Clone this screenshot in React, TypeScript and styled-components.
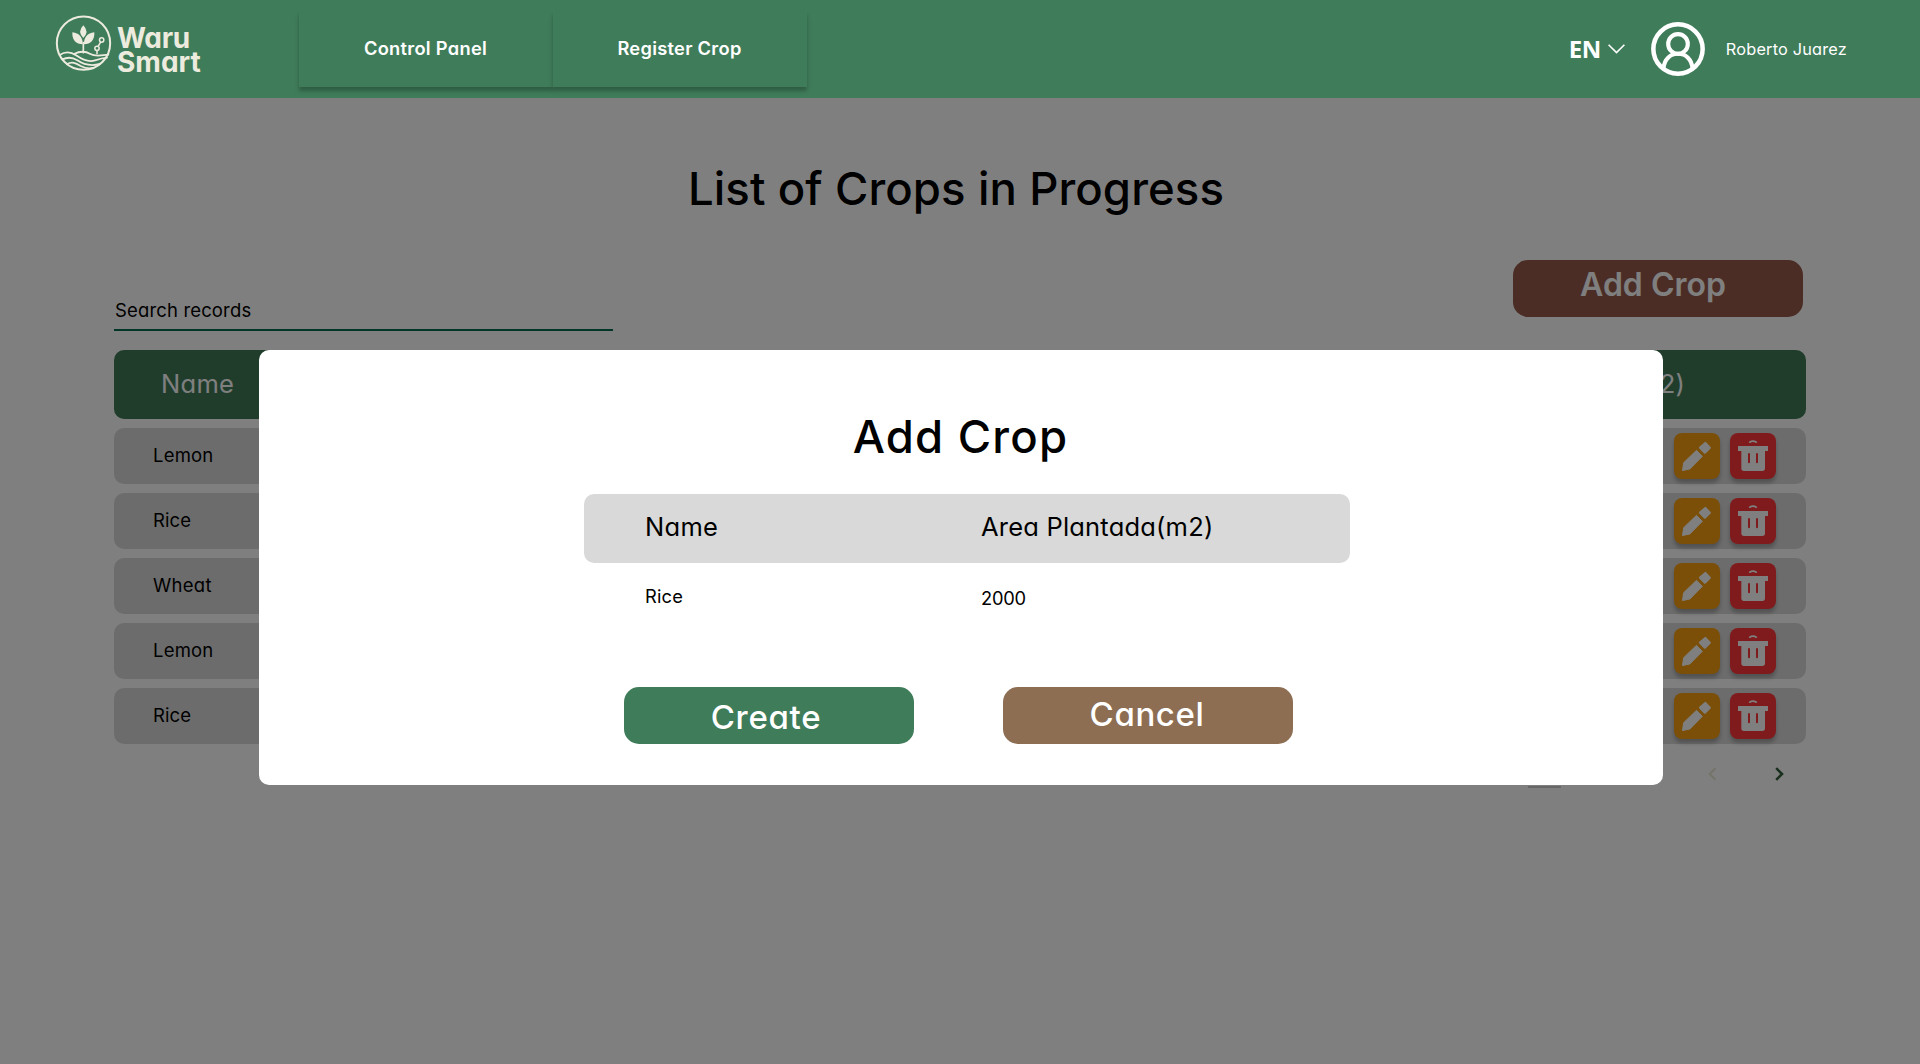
import React from 'react';
import styled, { createGlobalStyle } from 'styled-components';

const GlobalStyle = createGlobalStyle`
  *, *::before, *::after { box-sizing: border-box; }
  body {
    margin: 0;
    background: #fff;
    color: #000;
    font-family: Inter, "Liberation Sans", sans-serif;
    font-feature-settings: "cv11";
  }
  button { font: inherit; font-feature-settings: inherit; border: 0; padding: 0; cursor: pointer; }
`;

const Screen = styled.div`
  position: relative;
  display: flex;
  flex-direction: column;
  width: 1920px;
  height: 1064px;
  overflow: hidden;
`;

/* ---------- header ---------- */

const Header = styled.header`
  display: flex;
  align-items: flex-start;
  height: 98px;
  flex: none;
  padding: 0 73px 0 50px;
  background: #3f7c5a;
  color: #fff;
`;

const Brand = styled.div`
  display: flex;
  width: 249px;
  padding-top: 8px;
  color: #ecebdd;
`;

const BrandName = styled.div`
  display: flex;
  flex-direction: column;
  margin: 18px 0 0 -3px;
  font-size: 28px;
  font-weight: 700;
  line-height: 24px;
`;

const BrandLine = styled.span<{ $spacing: number }>`
  letter-spacing: ${p => p.$spacing}px;
`;

const Nav = styled.nav`
  display: flex;
  margin-top: 11px;
`;

const NavItem = styled.button`
  width: 254px;
  height: 76px;
  padding: 0 1px 2px 0;
  background: #3f7c5a;
  color: #fff;
  font-size: 18.3px;
  font-weight: 600;
  letter-spacing: 0.28px;
  box-shadow: 0 4px 4px rgba(0, 0, 0, 0.25);
`;

const Account = styled.div`
  display: flex;
  align-items: center;
  height: 98px;
  margin-left: auto;
`;

const Language = styled.span`
  display: flex;
  align-items: center;
  gap: 7px;
  margin-right: 26px;
  padding-bottom: 1px;
  font: 700 24px/32px "Noto Sans", "Open Sans", sans-serif;
  letter-spacing: -0.4px;
`;

const UserName = styled.span`
  margin-left: 21px;
  font-size: 16.3px;
  letter-spacing: 0.2px;
  line-height: 20px;
`;

/* ---------- page ---------- */

const Page = styled.main`
  display: flex;
  flex-direction: column;
  padding: 61px 114px 0;
`;

const Heading = styled.h1`
  margin: 0;
  font-size: 45.5px;
  font-weight: 500;
  line-height: 60px;
  text-align: center;
`;

const PageHeading = styled(Heading)`
  padding-right: 8px;
  letter-spacing: 0.1px;
`;

const Toolbar = styled.div`
  display: flex;
  justify-content: space-between;
  height: 90px;
  margin-top: 41px;
  padding-right: 3px;
`;

const Search = styled.div`
  display: flex;
  align-items: flex-end;
  width: 499px;
  height: 71px;
  padding: 0 0 7px 1px;
  border-bottom: 2px solid #006a4e;
  font-size: 18.5px;
  letter-spacing: 0.15px;
  line-height: 24px;
`;

const Button = styled.button<{ $color: string; $weight?: number; $size?: number; $spacing?: number; $lift: number; $shift: number }>`
  width: 290px;
  height: 57px;
  padding: ${p => Math.max(-p.$lift, 0)}px ${p => p.$shift}px ${p => Math.max(p.$lift, 0)}px 0;
  border-radius: 15px;
  background: ${p => p.$color};
  color: #fff;
  font-size: ${p => p.$size ?? 33}px;
  font-weight: ${p => p.$weight ?? 500};
  letter-spacing: ${p => p.$spacing ?? 0}px;
  line-height: 40px;
`;

const AddCropButton = styled(Button)`
  font-feature-settings: normal;
`;

const Table = styled.section`
  display: flex;
  flex-direction: column;
  gap: 9px;
`;

const TableHead = styled.div`
  display: flex;
  align-items: center;
  justify-content: space-between;
  height: 69px;
  padding: 0 121px 2px 47px;
  border-radius: 10px;
  background: #407b59;
  color: #fff;
  font-size: 25.5px;
`;

const Label = styled.span<{ $spacing: number }>`
  letter-spacing: ${p => p.$spacing}px;
`;

const TableRow = styled.div`
  display: flex;
  align-items: center;
  justify-content: space-between;
  height: 56px;
  padding: 0 30px 0 39px;
  border-radius: 10px;
  background: #d9d9d9;
  font-size: 18.5px;
`;

const CropName = styled(Label)`
  padding-bottom: 2px;
`;

const Actions = styled.div`
  display: flex;
  gap: 10px;
`;

const IconButton = styled.button<{ $color: string }>`
  display: flex;
  width: 46px;
  height: 46px;
  border-radius: 8px;
  background: ${p => p.$color};
  color: #fff;
  box-shadow: 0 4px 4px rgba(0, 0, 0, 0.25);
`;

const Pagination = styled.footer`
  display: flex;
  align-items: center;
  justify-content: flex-end;
  height: 44px;
  margin-top: 8px;
  padding-right: 20px;
`;

const PageSize = styled.div`
  width: 33px;
  height: 30px;
  align-self: flex-end;
  margin: 0 145px 8px 0;
  border-bottom: 2px solid #cecece;
`;

const PageArrow = styled.svg<{ $color: string; $gap?: number }>`
  margin-right: ${p => p.$gap ?? 0}px;
  color: ${p => p.$color};
`;

/* ---------- modal ---------- */

const Overlay = styled.div`
  position: absolute;
  inset: 98px 0 0;
  display: flex;
  align-items: flex-start;
  padding: 252px 0 0 259px;
  background: rgba(0, 0, 0, 0.5);
`;

const Modal = styled.div`
  display: flex;
  flex-direction: column;
  width: 1404px;
  height: 435px;
  padding-top: 57px;
  border-radius: 10px;
  background: #fff;
`;

const ModalHeading = styled(Heading)`
  padding-right: 1px;
  letter-spacing: 1.2px;
`;

const FormGrid = styled.div`
  display: grid;
  grid-template-columns: 336px 1fr;
  align-items: center;
  width: 766px;
  margin-left: 325px;
  padding-left: 61px;
`;

const FormHead = styled(FormGrid)`
  height: 69px;
  margin-top: 27px;
  padding-bottom: 4px;
  border-radius: 10px;
  background: #d9d9d9;
  font-size: 25.5px;
`;

const FormValues = styled(FormGrid)`
  height: 68px;
  padding-bottom: 2px;
  font-size: 18.3px;
  line-height: 24px;
`;

const Value = styled.span<{ $top?: number; $spacing: number }>`
  padding-top: ${p => p.$top ?? 0}px;
  letter-spacing: ${p => p.$spacing}px;
`;

const ModalActions = styled.div`
  display: flex;
  gap: 89px;
  margin: 56px 0 0 365px;
`;

/* ---------- drawings ---------- */

const LogoMark = () => (
  <svg width="70" height="70" viewBox="0 0 210 210" fill="none" stroke="currentColor" strokeLinecap="round">
    <circle cx="100.500" cy="105.500" r="80" strokeWidth="6" />
    <path d="M100 52Q81 71 100 90Q119 71 100 52Z" fill="currentColor" stroke="none" />
    <path d="M67 73C66 98 78 108 98 109C99 89 88 75 67 73Z" fill="currentColor" stroke="none" />
    <path d="M133 73C134 98 122 108 102 109C101 89 112 75 133 73Z" fill="currentColor" stroke="none" />
    <path d="M100 104V134" strokeWidth="5" />
    <circle cx="155" cy="96" r="6.500" strokeWidth="4.500" />
    <circle cx="141" cy="121" r="6.500" strokeWidth="4.500" />
    <path d="M151.500 103L145 114M141 129V137" strokeWidth="4.500" />
    <path d="M29 141C46 130 62 131 78 142C94 153 115 164 135 157C148 153 160 150 171 149" strokeWidth="5.500" />
    <path d="M72 138C88 130 106 129 121 138C136 147 152 142 175 140" strokeWidth="5.500" />
    <path d="M37 154C54 146 68 148 82 157C98 168 123 175 150 168" strokeWidth="5.500" />
    <path d="M51 169C65 159 78 166 92 174C105 181 114 183 130 180" strokeWidth="5.500" />
  </svg>
);

const AvatarIcon = () => (
  <svg width="54" height="54" viewBox="0 0 55 55" fill="none" stroke="#fff">
    <circle cx="27.500" cy="27.500" r="25.100" strokeWidth="4.600" />
    <circle cx="27.500" cy="22.300" r="10" strokeWidth="4.200" />
    <path d="M12.800 47C13.500 38 19.500 32.400 27.500 32.400S41.500 38 42.200 47" strokeWidth="4.200" />
  </svg>
);

const ChevronDown = () => (
  <svg width="17" height="10" viewBox="0 0 17 10" fill="none" stroke="#fff" strokeWidth="1.600">
    <path d="M.6 .7L8.500 8.600L16.400 .7" />
  </svg>
);

const PencilIcon = () => (
  <svg width="46" height="46" viewBox="0 0 138 138" fill="currentColor" stroke="currentColor" strokeLinejoin="round">
    <path d="M25.500 112.500L29 89L67.500 52L85 70L47.500 108Z" strokeWidth="3" />
    <path d="M78 44L94 30L107.500 44L92.500 59Z" strokeWidth="6.500" />
  </svg>
);

const TrashIcon = () => (
  <svg width="46" height="46" viewBox="0 0 138 138" fill="currentColor">
    <path d="M59 27.500Q69 21.500 79 27.500" fill="none" stroke="currentColor" strokeWidth="5" strokeLinecap="round" />
    <path
      fillRule="evenodd"
      d="M24 39H114V54H105V106Q105 114 97 114H42Q34 114 34 106V54H24ZM57 60Q54 60 54 63V88Q54 91 57 91T60 88V63Q60 60 57 60ZM81 60Q78 60 78 63V88Q78 91 81 91T84 88V63Q84 60 81 60Z"
    />
  </svg>
);

const crops = [
  { name: 'Lemon', spacing: 0.2 },
  { name: 'Rice', spacing: 0.1 },
  { name: 'Wheat', spacing: 0.3 },
  { name: 'Lemon', spacing: 0.2 },
  { name: 'Rice', spacing: 0.1 },
];

export default function App() {
  return (
    <Screen>
      <GlobalStyle />
      <Header>
        <Brand>
          <LogoMark />
          <BrandName>
            <BrandLine $spacing={-0.3}>Waru</BrandLine>
            <BrandLine $spacing={0}>Smart</BrandLine>
          </BrandName>
        </Brand>
        <Nav>
          <NavItem>Control Panel</NavItem>
          <NavItem>Register Crop</NavItem>
        </Nav>
        <Account>
          <Language>
            EN
            <ChevronDown />
          </Language>
          <AvatarIcon />
          <UserName>Roberto Juarez</UserName>
        </Account>
      </Header>

      <Page>
        <PageHeading>List of Crops in Progress</PageHeading>
        <Toolbar>
          <Search>Search records</Search>
          <AddCropButton $color="#965a4c" $weight={600} $size={32} $lift={8} $shift={10}>Add Crop</AddCropButton>
        </Toolbar>
        <Table>
          <TableHead>
            <Label $spacing={0.3}>Name</Label>
            <Label $spacing={0.2}>Area Plantada(m2)</Label>
          </TableHead>
          {crops.map((crop, i) => (
            <TableRow key={i}>
              <CropName $spacing={crop.spacing}>{crop.name}</CropName>
              <Actions>
                <IconButton $color="#f69e0e" aria-label="Edit"><PencilIcon /></IconButton>
                <IconButton $color="#ff373b" aria-label="Delete"><TrashIcon /></IconButton>
              </Actions>
            </TableRow>
          ))}
        </Table>
        <Pagination>
          <PageSize />
          <PageArrow $color="#e9e9d4" $gap={54} width="13" height="14" viewBox="0 0 13 14" fill="none" stroke="currentColor" strokeWidth="2.200">
            <path d="M9.500 1.200L3.700 7L9.500 12.800" />
          </PageArrow>
          <PageArrow $color="#35603c" width="13" height="14" viewBox="0 0 13 14" fill="none" stroke="currentColor" strokeWidth="2.600">
            <path d="M3.200 1.200L9 7L3.200 12.800" />
          </PageArrow>
        </Pagination>
      </Page>

      <Overlay>
        <Modal role="dialog">
          <ModalHeading as="h2">Add Crop</ModalHeading>
          <FormHead>
            <Label $spacing={0.3}>Name</Label>
            <Label $spacing={0.2}>Area Plantada(m2)</Label>
          </FormHead>
          <FormValues>
            <Value $spacing={0.2}>Rice</Value>
            <Value $top={4} $spacing={-0.2}>2000</Value>
          </FormValues>
          <ModalActions>
            <Button $color="#3f7c5a" $spacing={0.7} $lift={-3} $shift={6}>Create</Button>
            <Button $color="#8d6e53" $spacing={0.6} $lift={3} $shift={2}>Cancel</Button>
          </ModalActions>
        </Modal>
      </Overlay>
    </Screen>
  );
}
